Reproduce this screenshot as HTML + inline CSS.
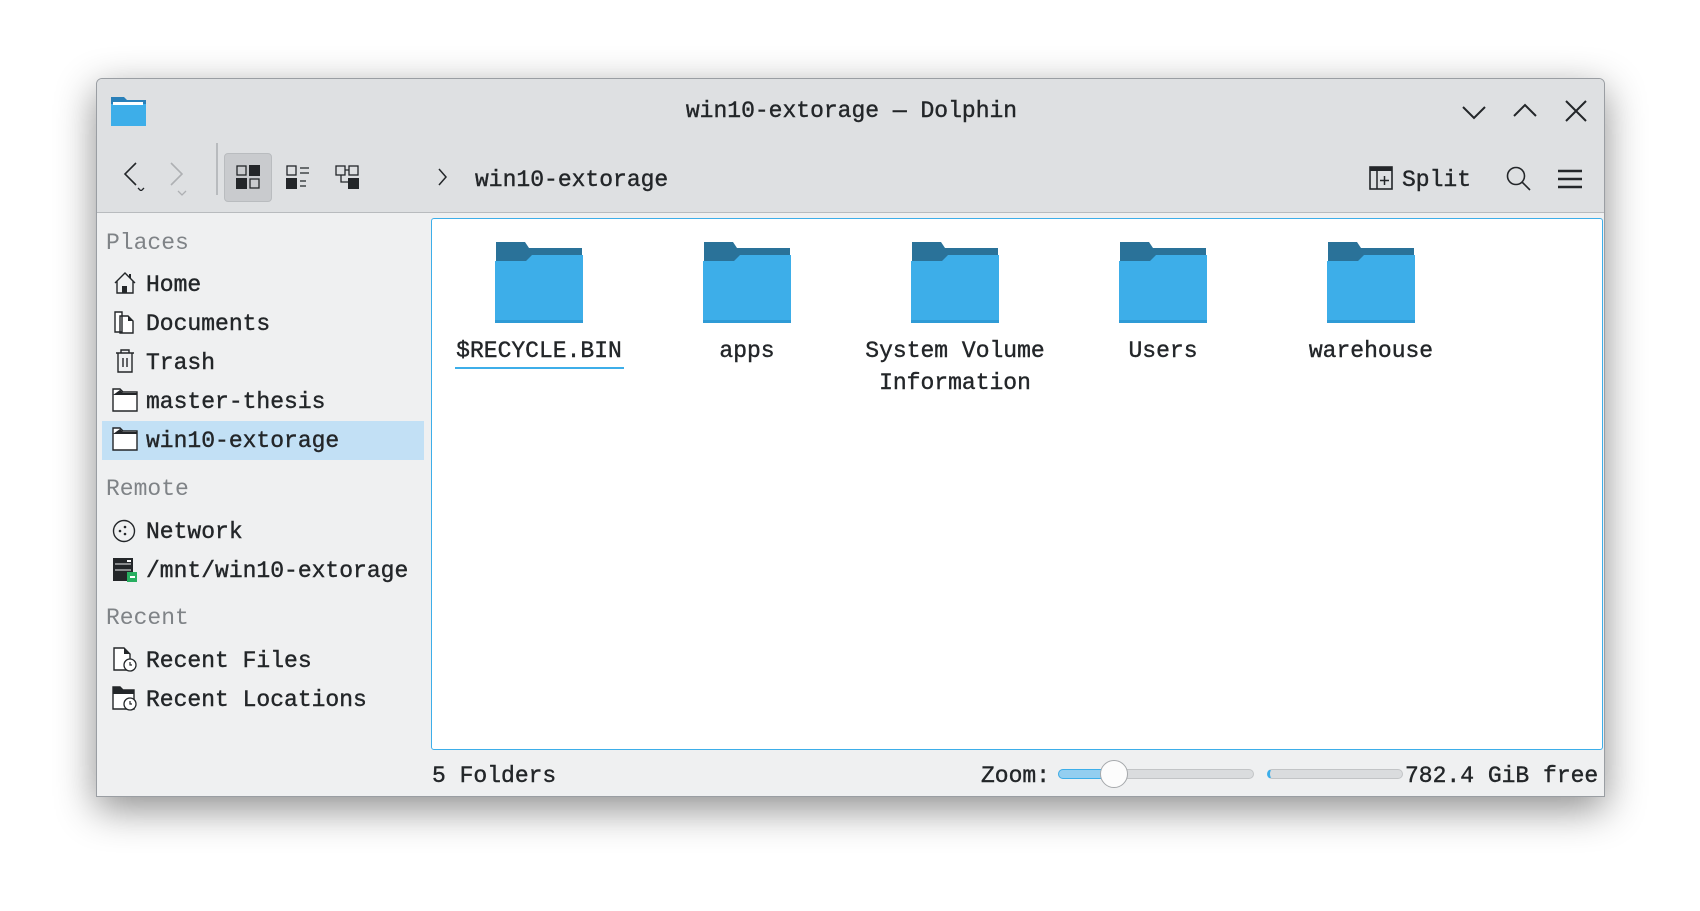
<!DOCTYPE html>
<html><head><meta charset="utf-8"><style>
*{margin:0;padding:0;box-sizing:border-box}
body{width:1700px;height:911px;background:#fff;position:relative;overflow:hidden;font-family:"Liberation Mono",monospace;color:#232629}
.win{position:absolute;left:96px;top:78px;width:1509px;height:719px;background:#eff0f1;border:1px solid #9a9ea3;border-radius:6px 6px 0 0;box-shadow:0 12px 40px rgba(0,0,0,.45);overflow:hidden}
.top{position:absolute;left:0;top:0;width:100%;height:134px;background:#dee0e2;border-bottom:1px solid #b8bbbe}
.a{position:absolute;white-space:nowrap}
.t{font-size:23px;line-height:26px;-webkit-text-stroke:0.4px #232629}
.lbl{font-size:23px;color:#7f8387}
.pane{position:absolute;left:334px;top:139px;width:1172px;height:532px;background:#fff;border:1px solid #3daee9;border-radius:3px}
.fold{position:absolute;top:23px;width:88px;height:81px}
.fname{position:absolute;top:116px;width:200px;text-align:center;font-size:23px;line-height:32px;-webkit-text-stroke:0.4px #232629}
svg{position:absolute}
</style></head><body>
<div class="win">
<div class="top">
 <svg style="left:13px;top:16px" width="37" height="32" viewBox="0 0 37 32"><path d="M1 2h13l3 3h19v26H1z" fill="#2980b9"/><path d="M1 9h35v22H1z" fill="#3daee9"/><rect x="3" y="7" width="30" height="3" fill="#fff"/></svg>
 <div class="a t" style="left:0;width:1509px;text-align:center;top:19px">win10-extorage — Dolphin</div>
 <svg style="left:1363px;top:21px" width="28" height="22"><path d="M3 7l11 11 11-11" stroke="#232629" stroke-width="2" fill="none"/></svg>
 <svg style="left:1414px;top:21px" width="28" height="22"><path d="M3 16l11-11 11 11" stroke="#232629" stroke-width="2" fill="none"/></svg>
 <svg style="left:1467px;top:20px" width="24" height="24"><path d="M2 2l20 20M22 2L2 22" stroke="#232629" stroke-width="2" fill="none"/></svg>
 <svg style="left:26px;top:82px" width="60" height="30"><path d="M13 2L2 13l11 11" stroke="#232629" stroke-width="1.6" fill="none"/><path d="M15 27l3 3 3-3" stroke="#232629" stroke-width="1.3" fill="none"/><path d="M48 2l11 11-11 11" stroke="#aeb0b3" stroke-width="1.6" fill="none"/></svg>
 <svg style="left:80px;top:111px" width="10" height="6"><path d="M1 1l4 4 4-4" stroke="#aeb0b3" stroke-width="1.3" fill="none"/></svg>
 <div class="a" style="left:119px;top:64px;width:2px;height:52px;background:#b8bbbe"></div>
 <div class="a" style="left:127px;top:74px;width:48px;height:49px;background:#c9cbce;border:1px solid #b9bcbf;border-radius:4px"></div>
 <svg style="left:139px;top:86px" width="26" height="26"><rect x="1" y="1" width="9" height="9" fill="none" stroke="#232629" stroke-width="1.3"/><rect x="13" y="0" width="11" height="11" fill="#232629"/><rect x="0" y="13" width="11" height="11" fill="#232629"/><rect x="14" y="14" width="9" height="9" fill="none" stroke="#232629" stroke-width="1.3"/></svg>
 <svg style="left:189px;top:86px" width="26" height="26"><rect x="1" y="1" width="9" height="9" fill="none" stroke="#232629" stroke-width="1.3"/><path d="M14 3h9M14 8h9M14 16h6M14 21h6" stroke="#232629" stroke-width="1.3"/><rect x="0" y="13" width="11" height="11" fill="#232629"/></svg>
 <svg style="left:238px;top:86px" width="26" height="26"><rect x="1" y="1" width="9" height="9" fill="none" stroke="#232629" stroke-width="1.3"/><rect x="14" y="1" width="9" height="9" fill="none" stroke="#232629" stroke-width="1.3"/><path d="M10 5h4M6 10v7h7" stroke="#232629" stroke-width="1.3" fill="none"/><rect x="13" y="13" width="11" height="11" fill="#232629"/></svg>
 <svg style="left:340px;top:88px" width="12" height="20"><path d="M2 2l7 8-7 8" stroke="#232629" stroke-width="1.5" fill="none"/></svg>
 <div class="a t" style="left:378px;top:88px">win10-extorage</div>
 <svg style="left:1272px;top:87px" width="24" height="24"><rect x="1" y="1" width="22" height="22" fill="none" stroke="#232629" stroke-width="1.6"/><rect x="1" y="1" width="22" height="4" fill="#232629"/><path d="M8 5v18M15.5 10v9M11 14.5h9" stroke="#232629" stroke-width="1.5"/></svg>
 <div class="a t" style="left:1305px;top:88px">Split</div>
 <svg style="left:1408px;top:86px" width="28" height="28"><circle cx="11" cy="11" r="8.5" fill="none" stroke="#232629" stroke-width="1.6"/><path d="M17 17l8 8" stroke="#232629" stroke-width="1.6"/></svg>
 <svg style="left:1460px;top:89px" width="26" height="22"><path d="M1 3h24M1 11h24M1 19h24" stroke="#232629" stroke-width="2.4"/></svg>
</div>
<div class="side">
 <div class="a lbl" style="left:9px;top:151px">Places</div>
 <svg style="left:16px;top:192px" width="24" height="24"><path d="M2 12L12 2l10 10M4 10v12h16V10" fill="none" stroke="#232629" stroke-width="1.4"/><rect x="9" y="15" width="5" height="7" fill="#232629"/><rect x="16" y="3" width="2" height="4" fill="#232629"/></svg>
 <div class="a t" style="top:193px;left:49px">Home</div>
 <svg style="left:16px;top:231px" width="24" height="24"><path d="M2 2h7v20H2zM7 6h8l5 5v12H7z" fill="#fff" stroke="#232629" stroke-width="1.4"/><path d="M15 6l5 5h-5z" fill="#232629"/></svg>
 <div class="a t" style="top:232px;left:49px">Documents</div>
 <svg style="left:16px;top:270px" width="24" height="24"><path d="M3 4h18M8 4V1h8v3M5 4v19h14V4M10 9v9M14 9v9" fill="none" stroke="#232629" stroke-width="1.4"/></svg>
 <div class="a t" style="top:271px;left:49px">Trash</div>
 <svg style="left:15px;top:309px" width="26" height="24"><path d="M1 23V1h7l3 3h14v19z" fill="#fff" stroke="#232629" stroke-width="1.4"/><path d="M8 2l3 3h14v2H1z" fill="#232629"/></svg>
 <div class="a t" style="top:310px;left:49px">master-thesis</div>
 <div class="a" style="left:5px;top:342px;width:322px;height:39px;background:#c2e0f5"></div>
 <svg style="left:15px;top:348px" width="26" height="24"><path d="M1 23V1h7l3 3h14v19z" fill="#fff" stroke="#232629" stroke-width="1.4"/><path d="M8 2l3 3h14v2H1z" fill="#232629"/></svg>
 <div class="a t" style="top:349px;left:49px">win10-extorage</div>
 <div class="a lbl" style="left:9px;top:397px">Remote</div>
 <svg style="left:15px;top:440px" width="24" height="24"><circle cx="12" cy="12" r="10.5" fill="none" stroke="#232629" stroke-width="1.4"/><circle cx="8" cy="12" r="1.3" fill="#232629"/><circle cx="13" cy="8" r="1.3" fill="#232629"/><circle cx="13" cy="15" r="1.3" fill="#232629"/></svg>
 <div class="a t" style="top:440px;left:49px">Network</div>
 <svg style="left:15px;top:478px" width="26" height="26"><rect x="1" y="1" width="20" height="23" fill="#232629"/><path d="M3 7h16M3 13h16" stroke="#eff0f1" stroke-width="1"/><rect x="15" y="3" width="4" height="2" fill="#fff"/><rect x="15" y="15" width="10" height="10" fill="#27ae60"/><path d="M18 20h5" stroke="#fff" stroke-width="2"/></svg>
 <div class="a t" style="top:479px;left:49px">/mnt/win10-extorage</div>
 <div class="a lbl" style="left:9px;top:526px">Recent</div>
 <svg style="left:15px;top:568px" width="26" height="26"><path d="M2 1h10l6 6v16H2z" fill="#fff" stroke="#232629" stroke-width="1.4"/><path d="M12 1l6 6h-6z" fill="#232629"/><circle cx="18" cy="18" r="6" fill="#fff" stroke="#232629" stroke-width="1.3"/><path d="M18 15v3h2" stroke="#232629" stroke-width="1.2" fill="none"/></svg>
 <div class="a t" style="top:569px;left:49px">Recent Files</div>
 <svg style="left:15px;top:607px" width="26" height="26"><path d="M1 23V1h7l3 3h11v19z" fill="#fff" stroke="#232629" stroke-width="1.4"/><path d="M1 1h7l3 3h11v4H1z" fill="#232629"/><circle cx="18" cy="18" r="6" fill="#fff" stroke="#232629" stroke-width="1.3"/><path d="M18 15v3h2" stroke="#232629" stroke-width="1.2" fill="none"/></svg>
 <div class="a t" style="top:608px;left:49px">Recent Locations</div>
</div>
<div class="pane">
 <svg class="fold" style="left:63px" viewBox="0 0 88 81"><path d="M1 0h29l4 6h53v14H1z" fill="#2a7299"/><path d="M0 19h31l6-6h51v68H0z" fill="#3daee9"/><rect x="0" y="78" width="88" height="3" fill="#2f9bd6"/></svg>
 <svg class="fold" style="left:271px" viewBox="0 0 88 81"><path d="M1 0h29l4 6h53v14H1z" fill="#2a7299"/><path d="M0 19h31l6-6h51v68H0z" fill="#3daee9"/><rect x="0" y="78" width="88" height="3" fill="#2f9bd6"/></svg>
 <svg class="fold" style="left:479px" viewBox="0 0 88 81"><path d="M1 0h29l4 6h53v14H1z" fill="#2a7299"/><path d="M0 19h31l6-6h51v68H0z" fill="#3daee9"/><rect x="0" y="78" width="88" height="3" fill="#2f9bd6"/></svg>
 <svg class="fold" style="left:687px" viewBox="0 0 88 81"><path d="M1 0h29l4 6h53v14H1z" fill="#2a7299"/><path d="M0 19h31l6-6h51v68H0z" fill="#3daee9"/><rect x="0" y="78" width="88" height="3" fill="#2f9bd6"/></svg>
 <svg class="fold" style="left:895px" viewBox="0 0 88 81"><path d="M1 0h29l4 6h53v14H1z" fill="#2a7299"/><path d="M0 19h31l6-6h51v68H0z" fill="#3daee9"/><rect x="0" y="78" width="88" height="3" fill="#2f9bd6"/></svg>
 <div class="fname" style="left:7px">$RECYCLE.BIN</div>
 <div class="a" style="left:23px;top:148px;width:169px;height:2px;background:#3daee9"></div>
 <div class="fname" style="left:215px">apps</div>
 <div class="fname" style="left:423px">System Volume<br>Information</div>
 <div class="fname" style="left:631px">Users</div>
 <div class="fname" style="left:839px">warehouse</div>
</div>
<div class="a t" style="left:335px;top:684px">5 Folders</div>
<div class="a t" style="left:884px;top:684px">Zoom:</div>
<div class="a" style="left:961px;top:690px;width:196px;height:10px;border-radius:5px;background:#dadcde;border:1px solid #c2c4c6"></div>
<div class="a" style="left:961px;top:690px;width:55px;height:10px;border-radius:5px;background:#93cef0;border:1px solid #3daee9"></div>
<div class="a" style="left:1003px;top:681px;width:28px;height:28px;border-radius:50%;background:#fcfcfc;border:1px solid #a5a8ab"></div>
<div class="a" style="left:1170px;top:690px;width:136px;height:10px;border-radius:5px;background:#dadcde;border:1px solid #c2c4c6;border-left:3px solid #3daee9"></div>
<div class="a t" style="left:1308px;top:684px">782.4 GiB free</div>
</div>
</body></html>
